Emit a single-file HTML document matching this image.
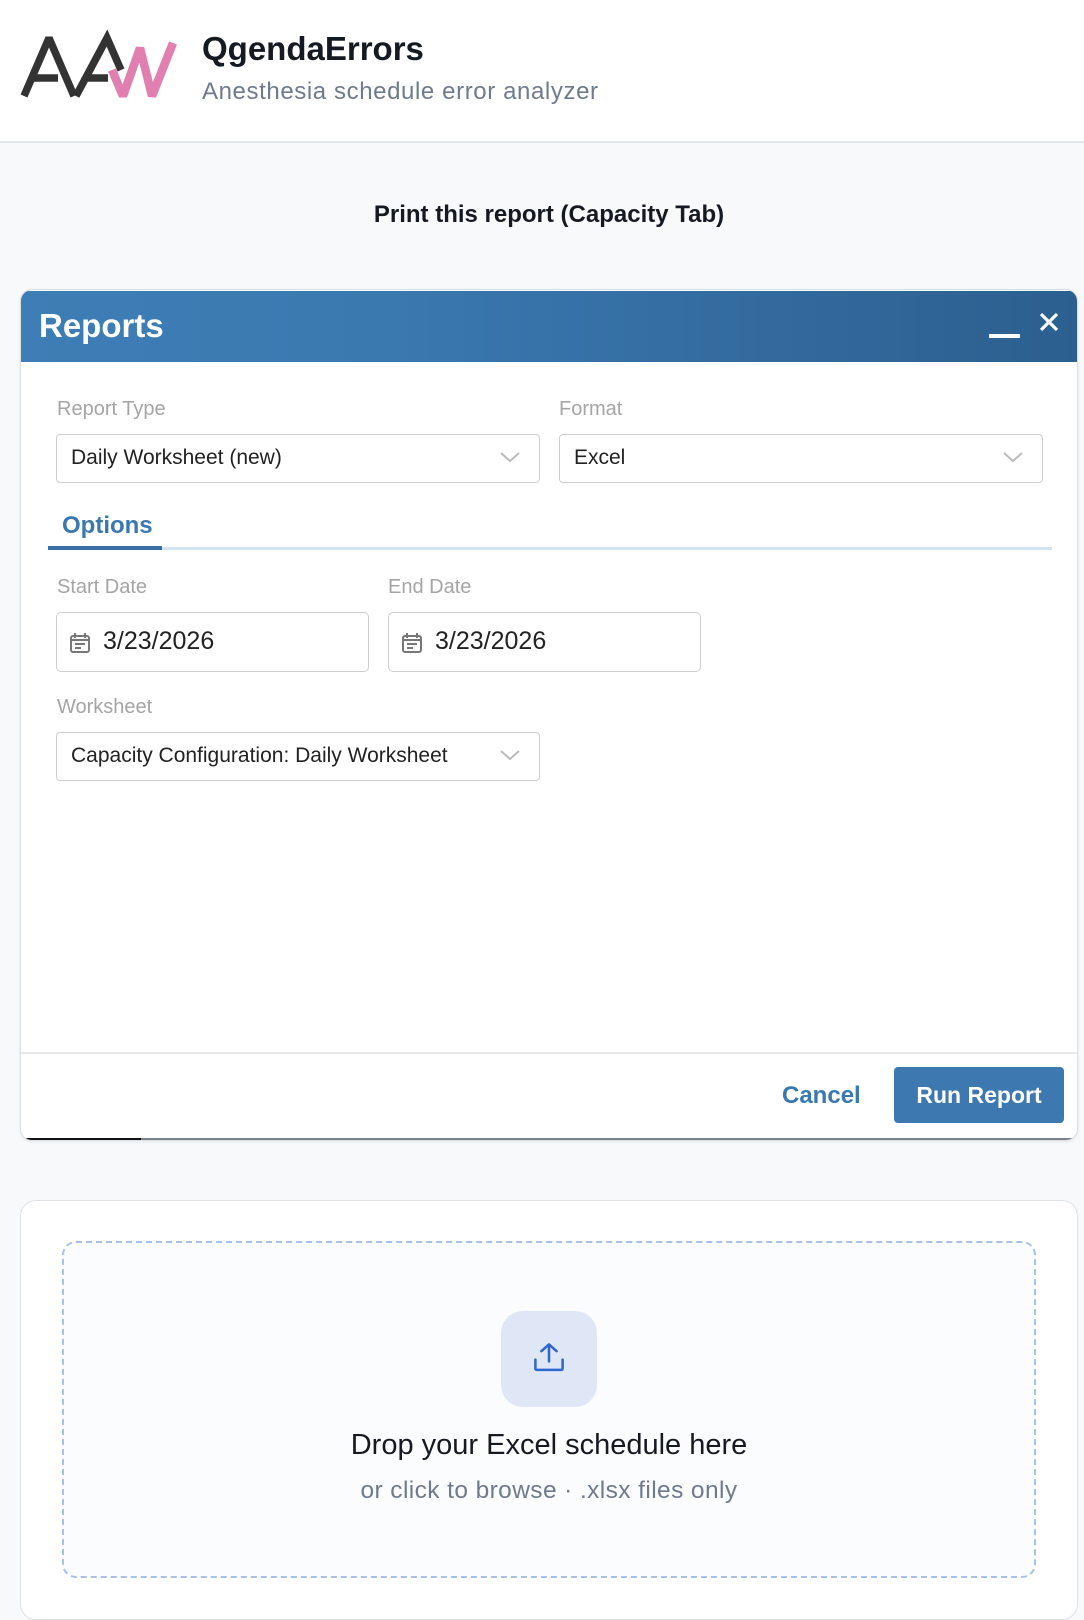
<!DOCTYPE html>
<html><head><meta charset="utf-8"><style>
*{box-sizing:border-box;margin:0;padding:0}
body{width:1084px;height:1590px;background:#f8f9fb;font-family:"Liberation Sans",sans-serif;position:relative;overflow:hidden}
.hdr{position:absolute;left:0;top:0;width:1084px;height:143px;background:#fff;border-bottom:2px solid #e3e6ea}
.abs{position:absolute}
.card{position:absolute;left:20px;top:289px;width:1058px;height:852px;background:#fff;border:1px solid #dcdfe4;border-radius:12px;overflow:hidden;box-shadow:0 1px 3px rgba(0,0,0,.08)}
.bar{position:absolute;left:0;top:1px;width:100%;height:71px;background:linear-gradient(90deg,#3e7db5 0%,#3a78b0 35%,#2c5f8f 100%)}
.lbl{position:absolute;color:#a5a5a5;font-size:20px}
.sel{position:absolute;height:49px;border:1.5px solid #cfcfcf;border-radius:4px;font-size:21px;color:#222;padding-left:14px;line-height:46px}
.chev{position:absolute;right:18px;top:14px}
</style></head><body>
<div class="hdr">
<svg class="abs" style="left:0;top:0" width="190" height="110" viewBox="0 0 190 110">
<g fill="none" stroke="#333" stroke-width="7.5" stroke-linejoin="miter" stroke-miterlimit="2.5">
<path d="M24 96 L49 38 L74 96"/>
<path d="M30 78 H58"/>
<path d="M76 96 L107 38 L121 70"/>
<path d="M88 78 H108"/>
</g>
<path d="M112 70 L123 96 L140 48 L152 96 L173 43" fill="none" stroke="#e07fb0" stroke-width="8.5" stroke-linejoin="miter" stroke-miterlimit="2.5"/>
</svg>
<div class="abs" style="left:202px;top:30px;font-size:33px;font-weight:bold;color:#151a22">QgendaErrors</div>
<div class="abs" style="left:202px;top:78px;font-size:24px;color:#6f7a8d;letter-spacing:.6px">Anesthesia schedule error analyzer</div>
</div>
<div class="abs" style="left:0;width:1098px;top:201px;text-align:center;font-size:24px;font-weight:bold;color:#151a22">Print this report (Capacity Tab)</div>

<div class="card">
<div class="bar"></div>
<div class="abs" style="left:18px;top:17px;font-size:33px;font-weight:bold;color:#fff">Reports</div>
<div class="abs" style="left:968px;top:44px;width:31px;height:4px;background:#fff"></div>
<svg class="abs" style="left:1018px;top:22px" width="20" height="20" viewBox="0 0 20 20"><path d="M2 2 L18 18 M18 2 L2 18" stroke="#fff" stroke-width="3.2"/></svg>

<div class="lbl" style="left:36px;top:108px">Report Type</div>
<div class="lbl" style="left:538px;top:108px">Format</div>
<div class="sel" style="left:35px;top:144px;width:484px">Daily Worksheet (new)<svg class="chev" width="22" height="16" viewBox="0 0 22 16"><path d="M2 4 L11 12 L20 4" fill="none" stroke="#bbb" stroke-width="2"/></svg></div>
<div class="sel" style="left:538px;top:144px;width:484px">Excel<svg class="chev" width="22" height="16" viewBox="0 0 22 16"><path d="M2 4 L11 12 L20 4" fill="none" stroke="#bbb" stroke-width="2"/></svg></div>

<div class="abs" style="left:41px;top:222px;font-size:24px;font-weight:bold;color:#3a78b0">Options</div>
<div class="abs" style="left:27px;top:257px;width:1004px;height:3px;background:#d4e3f1"></div>
<div class="abs" style="left:27px;top:256px;width:114px;height:4px;background:#3a6fa6"></div>

<div class="lbl" style="left:36px;top:286px">Start Date</div>
<div class="lbl" style="left:367px;top:286px">End Date</div>
<div class="sel" style="left:35px;top:322px;width:313px;height:60px;line-height:57px;font-size:25px;padding-left:46px;border-radius:5px">3/23/2026
<svg class="abs" style="left:12px;top:19px" width="22" height="22" viewBox="0 0 22 22"><rect x="2" y="4" width="18" height="16" rx="2" fill="none" stroke="#777" stroke-width="2"/><path d="M6 1 V6 M16 1 V6 M2 8 H20 M6 12 H16 M6 16 H12" stroke="#777" stroke-width="2"/></svg></div>
<div class="sel" style="left:367px;top:322px;width:313px;height:60px;line-height:57px;font-size:25px;padding-left:46px;border-radius:5px">3/23/2026
<svg class="abs" style="left:12px;top:19px" width="22" height="22" viewBox="0 0 22 22"><rect x="2" y="4" width="18" height="16" rx="2" fill="none" stroke="#777" stroke-width="2"/><path d="M6 1 V6 M16 1 V6 M2 8 H20 M6 12 H16 M6 16 H12" stroke="#777" stroke-width="2"/></svg></div>

<div class="lbl" style="left:36px;top:406px">Worksheet</div>
<div class="sel" style="left:35px;top:442px;width:484px">Capacity Configuration: Daily Worksheet<svg class="chev" width="22" height="16" viewBox="0 0 22 16"><path d="M2 4 L11 12 L20 4" fill="none" stroke="#bbb" stroke-width="2"/></svg></div>

<div class="abs" style="left:0;top:762px;width:100%;height:2px;background:#e8e8e8"></div>
<div class="abs" style="left:761px;top:792px;font-size:24px;font-weight:bold;color:#3a78b0">Cancel</div>
<div class="abs" style="left:873px;top:777px;width:170px;height:56px;background:#3d79b0;border-radius:4px;color:#fff;font-size:23px;font-weight:bold;text-align:center;line-height:56px">Run Report</div>
<div class="abs" style="left:0;bottom:0;width:100%;height:2px;background:#7a828c"></div>
<div class="abs" style="left:0;bottom:0;width:120px;height:2px;background:#111"></div>
</div>

<div class="abs" style="left:20px;top:1200px;width:1058px;height:420px;background:#fff;border:1.5px solid #dfe2e7;border-radius:16px"></div>
<div class="abs" style="left:62px;top:1241px;width:974px;height:337px;border:2px dashed #a9c0e8;border-radius:14px;background:#fbfcfe"></div>
<div class="abs" style="left:501px;top:1311px;width:96px;height:96px;background:#dfe7f7;border-radius:22px"></div>
<svg class="abs" style="left:529px;top:1339px" width="40" height="40" viewBox="0 0 40 40"><path d="M20 4 V24 M11 12 L20 4 L29 12 M4 22 V32 Q4 34 6 34 H34 Q36 34 36 32 V22" fill="none" stroke="#2f66d0" stroke-width="3" stroke-linecap="round" stroke-linejoin="round" transform="translate(3,2) scale(0.85)"/></svg>
<div class="abs" style="left:0;width:1098px;top:1429px;text-align:center;font-size:29px;color:#151a22">Drop your Excel schedule here</div>
<div class="abs" style="left:0;width:1098px;top:1477px;text-align:center;font-size:24.5px;color:#6f7a8d;letter-spacing:.4px">or click to browse · .xlsx files only</div>
</body></html>
